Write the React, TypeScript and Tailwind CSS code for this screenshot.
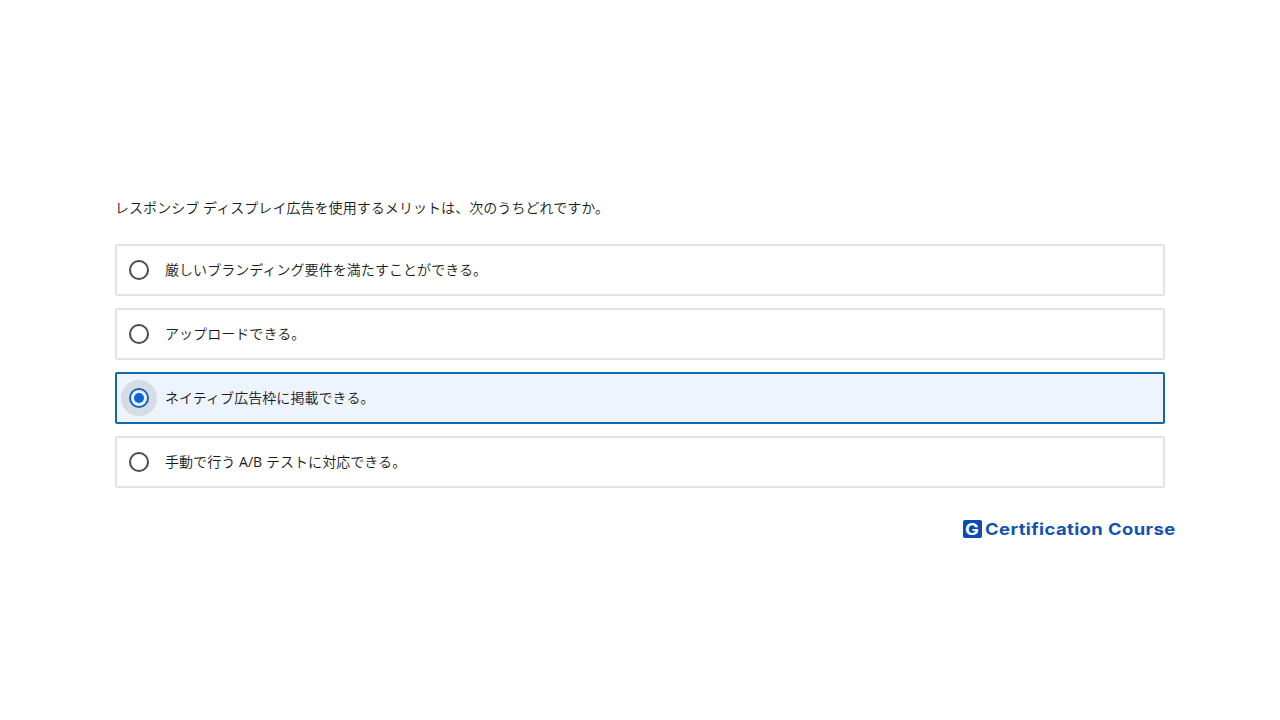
import React, { useState } from "react";
import clsx from "clsx";

const question =
  "レスポンシブ ディスプレイ広告を使用するメリットは、次のうちどれですか。";

const answers = [
  "厳しいブランディング要件を満たすことができる。",
  "アップロードできる。",
  "ネイティブ広告枠に掲載できる。",
  <>
    手動で行う <span className="font-normal">A/B</span> テストに対応できる。
  </>,
];

const RadioMark = ({ checked }: { checked: boolean }) => (
  <span
    className={clsx(
      "flex size-9 shrink-0 items-center justify-center rounded-full",
      checked && "bg-[#d5dce4]"
    )}
  >
    <span
      className={clsx(
        "flex size-5 items-center justify-center rounded-full border-2",
        checked ? "border-[#1264bd] bg-[#e8f1fb]" : "border-[#474b52]"
      )}
    >
      {checked && <span className="size-2.5 rounded-full bg-[#0764d2]" />}
    </span>
  </span>
);

const Brand = () => (
  <div className="flex h-5 w-[212px] items-center gap-[3px] font-['Inter',sans-serif] text-[#1353ad]">
    <span className="flex h-[18px] w-[19px] shrink-0 items-center justify-center rounded-[2px] bg-[#084db5] text-[16px] leading-none font-bold text-white">
      <span className="scale-x-[1.15]">G</span>
    </span>
    <span className="origin-left scale-x-[1.15] whitespace-nowrap text-[16px] leading-5 font-bold tracking-[0.36px]">
      Certification Course
    </span>
  </div>
);

export default function App() {
  const [selected, setSelected] = useState(2);

  return (
    <main className="h-screen overflow-hidden bg-white px-[115px] pt-[197px] font-['Open_Sans','Noto_Sans_CJK_JP',sans-serif] text-sm font-[350] tracking-[0.06px] text-[#1a1a1a]">
      <h1 className="h-[22px] leading-[22px] font-[350]">{question}</h1>
      <div role="radiogroup" className="mt-[25px] flex flex-col gap-3">
        {answers.map((answer, idx) => (
          <button
            key={idx}
            type="button"
            role="radio"
            aria-checked={selected === idx}
            onClick={() => setSelected(idx)}
            className={clsx(
              "flex h-[52px] items-center gap-2 rounded-[2px] border-2 pl-1 text-left",
              selected === idx
                ? "border-[#1368ac] bg-[#edf4fd]"
                : "border-[#e4e4e4] bg-white"
            )}
          >
            <RadioMark checked={selected === idx} />
            <span className="leading-[22px]">{answer}</span>
          </button>
        ))}
      </div>
      <div className="-mr-[10px] mt-[31px] flex justify-end">
        <Brand />
      </div>
    </main>
  );
}
